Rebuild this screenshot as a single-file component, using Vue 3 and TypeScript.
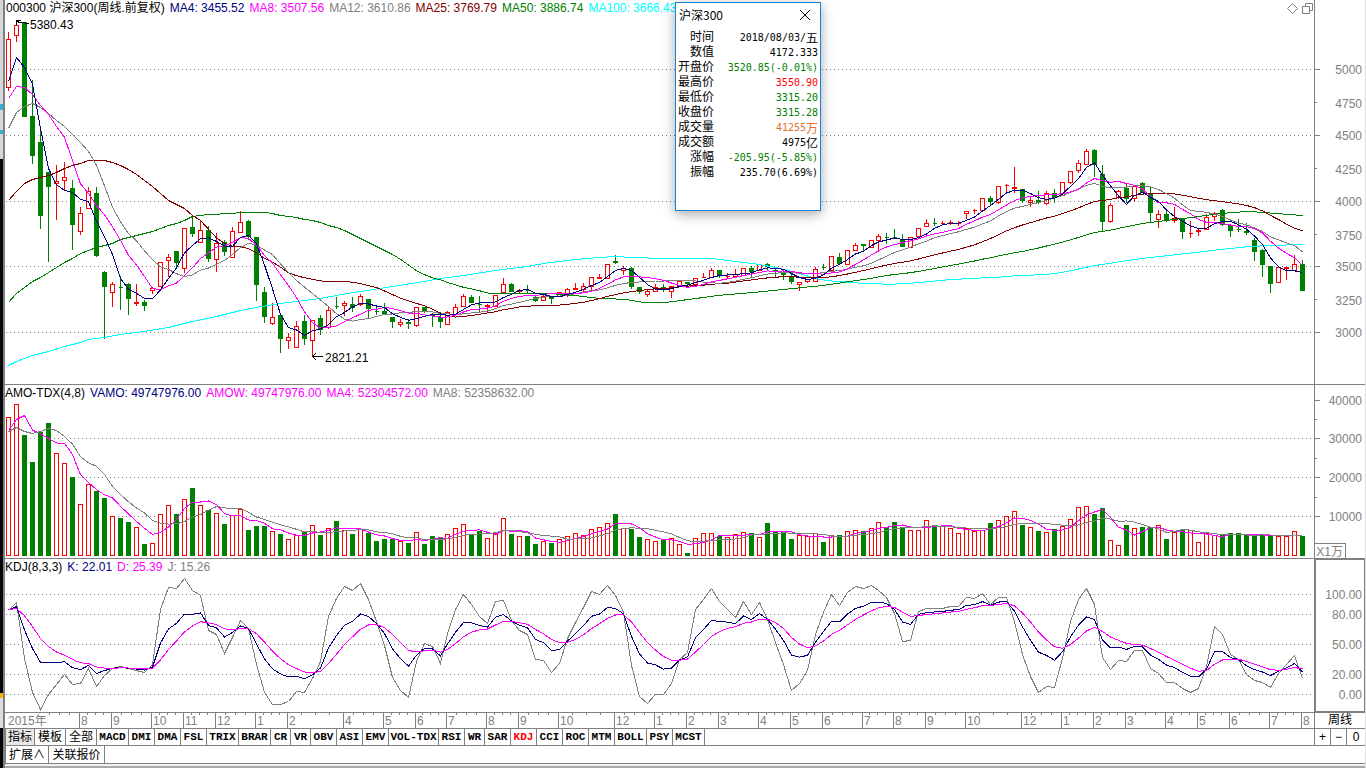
<script setup lang="ts">
import { ref } from 'vue'

type Point = [number, number]
interface Candle { up: boolean; high: number; top: number; bottom: number; low: number }

const candleSource = `
u32,39,87,90 u22,25,35,41 d22,22,116,116 d80,116,155,163 d131,142,215,228 d172,172,186,261 u165,181,183,219 u162,177,180,190
d180,188,224,249 u207,213,231,234 u187,191,208,208 d187,193,255,256 d271,272,286,338 u282,284,292,306 d276,287,287,309 d283,284,298,314
u284,302,303,305 d300,302,305,310 u287,288,290,293 u262,262,286,286 u254,257,260,276 d251,251,262,266 u228,228,268,272 d215,227,233,236
u220,230,242,242 d226,230,258,261 u233,243,259,271 d240,242,251,255 u227,231,257,257 u211,222,232,232 d220,221,236,239 d237,237,284,300
d287,292,316,322 u303,317,323,324 d313,315,338,352 u333,337,340,348 u321,326,347,347 d315,321,338,344 u320,320,340,356 d315,318,329,334
u306,310,327,328 d297,306,306,308 u301,303,305,315 d297,304,307,311 u294,296,304,305 d299,299,308,317 d307,311,311,314 d303,311,313,313
d317,317,321,327 u319,322,324,326 d319,322,323,328 u307,307,325,326 d307,307,311,312 d313,315,315,326 d312,317,321,327 u311,312,324,324
u304,307,314,314 u294,296,306,306 d295,297,302,302 d296,304,304,311 u304,305,306,311 u295,295,306,306 u278,284,292,292 d283,284,291,291
u289,290,291,292 d285,290,290,293 d296,297,300,301 u294,296,300,300 d296,296,298,303 u292,292,296,296 u288,289,293,296 u283,288,289,289
u283,286,289,291 u277,277,286,290 u274,277,278,278 u264,264,278,278 d255,261,262,263 u266,268,270,274 d267,268,286,288 d287,287,291,293
u289,291,294,296 u284,287,291,291 d284,287,289,291 u286,286,291,297 u281,281,286,286 d282,282,283,284 u278,278,284,286 u273,277,277,277
u268,270,277,277 d270,270,275,277 u273,276,276,277 u269,274,276,276 u268,268,275,275 d266,268,271,276 u264,264,270,270 d263,264,266,269
d269,270,271,277 d269,273,274,279 d274,276,281,283 u282,282,284,290 u279,279,281,282 u267,269,281,281 d264,267,267,269 u256,256,270,270
d253,257,263,264 u250,250,264,264 u243,245,250,250 d244,244,245,250 u240,240,247,247 u234,236,240,251 d233,237,237,243 d229,237,237,238
d234,239,246,246 u237,237,247,247 u228,228,236,236 u219,223,226,226 d218,223,223,225 u221,223,223,224 u220,222,222,224 u221,223,223,225
u211,211,213,218 u209,210,210,213 u198,198,210,210 d196,198,201,205 u186,186,202,203 u184,185,185,193 u167,187,188,192 d189,189,200,202
u196,200,202,206 d191,200,202,203 u191,193,203,204 d189,193,197,202 u182,182,195,195 u171,171,182,183 u160,163,170,172 u149,151,164,164
d149,150,164,176 d165,174,221,231 u203,205,221,222 u190,191,197,198 d183,188,198,202 u185,186,198,201 d182,183,192,192 d187,193,212,222
u210,214,219,227 d210,214,220,221 u207,218,220,222 d218,218,231,238 u221,233,233,237 u228,230,231,235 u214,217,229,229 u212,213,216,220
d209,210,224,225 d225,225,230,236 d219,229,229,231 d223,231,232,234 d238,240,251,260 d249,250,264,276 d266,266,283,292 u267,267,282,282
u267,267,268,279 u255,264,270,270 d260,264,290,290`

const amountTops = `
417 404 435 462 432 423 453 463 477 504 484 491 498 516 518 522 527 544 543 514 505 514 499 488 505 510 513 524 515 509 530 526
526 531 534 539 535 531 525 535 528 521 530 534 529 533 541 539 539 541 543 532 544 536 537 534 528 524 534 531 538 533 518 534
536 536 544 541 543 539 536 533 535 529 527 523 514 528 529 537 539 541 540 538 544 553 538 533 533 536 537 534 532 533 537 523
531 532 539 535 536 533 542 535 535 531 530 531 528 522 527 522 527 530 530 520 525 526 528 533 528 531 530 523 520 516 511 525
527 531 532 529 526 519 507 506 514 508 540 545 525 528 527 527 525 539 532 529 530 542 533 535 535 533 533 535 535 535 535 536
536 531 536`

const jSource = `
84 92 36 2 -15 0 10 20 10 11 26 8 19 26 28 26 24 22 30 85 107 106 116 104 99 64 60 41 57 74 66 30 2 -10 -10 -7 3 2 16 33
78 96 108 104 111 95 73 49 17 4 -3 33 51 48 31 61 85 100 90 78 71 93 94 74 64 60 35 34 22 31 56 72 87 103 100 109 99 82 29 -2
-9 0 0 11 35 42 85 95 106 93 85 77 93 80 92 75 52 30 4 11 24 60 82 100 89 102 108 106 109 104 97 81 53 54 83 86 86 86 88 88
97 96 101 90 97 97 73 40 18 2 8 7 36 73 95 106 90 37 25 34 33 44 44 26 21 12 12 6 2 6 28 68 60 40 35 20 14 12 7 21 30 39 16`

const words = (s: string): string[] => s.trim().split(/\s+/)

const candles: Candle[] = words(candleSource).map((w) => {
  const [high, top, bottom, low] = w.slice(1).split(',').map(Number)
  return { up: w[0] === 'u', high, top, bottom, low }
})
const amounts = words(amountTops).map(Number)
const jValues = words(jSource).map(Number)

const xAt = (i: number): number => 8.5 + 8 * i - (i >= 55 ? 1 : 0) - (i >= 109 ? 1 : 0)
const toPoints = (pts: Point[]): string => pts.map(([i, y]) => `${xAt(i)},${(y + 0.5).toFixed(1)}`).join(' ')

const candlePath = (up: boolean): string =>
  candles
    .map((c, i) => {
      if (c.up !== up) return ''
      const x = xAt(i)
      const t = c.top + 0.5
      const b = c.bottom + 0.5
      const upper = c.high < c.top ? `M${x},${c.high + 0.5}V${t}` : ''
      const lower = c.low > c.bottom ? `M${x},${b}V${c.low + 0.5}` : ''
      return `M${x - 2},${t}H${x + 2}V${b}H${x - 2}Z${upper}${lower}`
    })
    .join('')

const amountPath = (up: boolean): string =>
  amounts
    .map((top, i) => (candles[i].up === up ? `M${xAt(i) - 2},${top + 0.5}h4V555.5h-4Z` : ''))
    .join('')

function average(values: number[], n: number, seed: Point[]): string {
  const pts: Point[] = [...seed]
  for (let i = n - 1; i < values.length; i++) {
    let sum = 0
    for (let k = 0; k < n; k++) sum += values[i - k]
    pts.push([i, sum / n])
  }
  return toPoints(pts)
}
const fromStart = (ys: number[]): Point[] => ys.map((y, i) => [i, y])

const closes = candles.map((c) => (c.up ? c.top : c.bottom))
const priceLines = [
  { color: '#00ffff', points: average(closes, 100, [
    [0, 365], [1, 361], [2, 358], [3, 355], [5, 351], [7, 346], [9, 342], [10, 339], [12, 337], [14, 334], [17, 331], [20, 327],
    [23, 321], [26, 316], [29, 310], [31, 307], [34, 303], [37, 300], [39, 298], [41, 295], [44, 291], [48, 286], [52, 281],
    [54, 278], [57, 275], [61, 270], [65, 266], [67, 263], [71, 259], [74, 257], [76, 256], [78, 257], [82, 258], [88, 258],
    [90, 260], [92, 262], [94, 264], [96, 267], [98, 271]]) },
  { color: '#008000', points: average(closes, 50, fromStart([
    302, 293, 287, 281, 277, 272, 267, 262, 258, 253, 250, 247, 245, 243, 239, 237, 235, 233, 231, 228, 225, 223, 220, 216, 215,
    214, 214, 213, 213, 212, 212, 212, 212, 213, 215, 216, 217, 219, 220, 222, 225, 227, 230, 234, 238, 242, 246, 250, 254])) },
  { color: '#800000', points: average(closes, 25, fromStart([
    200, 191, 183, 179, 177, 175, 172, 168, 165, 163, 160, 160, 160, 162, 165, 169, 174, 180, 186, 193, 200, 204, 208, 215])) },
  { color: '#808080', points: average(closes, 12, fromStart([128, 112, 106, 103, 107, 113, 120, 126, 134, 142, 151])) },
  { color: '#ff00ff', points: average(closes, 8, fromStart([98, 86, 87, 94, 105, 114, 126])) },
  { color: '#000080', points: average(closes, 4, fromStart([81, 57, 67])) },
]
const amountLines = [
  { color: '#ff00ff', points: average(amounts, 4, fromStart([430, 419, 415])) },
  { color: '#808080', points: average(amounts, 8, fromStart([431, 427, 431, 433, 431, 428, 430])) },
]

const kPoints: Point[] = []
const dPoints: Point[] = []
let previousD = 85
jValues.forEach((j, i) => {
  const d = (6 * previousD + j) / 7
  previousD = d
  kPoints.push([i, 694 - (j + 2 * d) / 3])
  dPoints.push([i, 694 - d])
})
const kdjLines = [
  { color: '#808080', points: toPoints(jValues.map((j, i): Point => [i, 694 - j])) },
  { color: '#000080', points: toPoints(kPoints) },
  { color: '#ff00ff', points: toPoints(dPoints) },
]

const priceAxis = [
  { y: 69, label: '5000' }, { y: 102, label: '4750', minor: true }, { y: 135, label: '4500' },
  { y: 168, label: '4250', minor: true }, { y: 201, label: '4000' }, { y: 234, label: '3750', minor: true },
  { y: 266, label: '3500' }, { y: 299, label: '3250', minor: true }, { y: 332, label: '3000' },
]
const amountAxis = [
  { y: 400, label: '40000' }, { y: 419, label: '', minor: true }, { y: 438, label: '30000' },
  { y: 458, label: '', minor: true }, { y: 477, label: '20000' }, { y: 497, label: '', minor: true },
  { y: 516, label: '10000' },
]
const kdjAxis = [
  { y: 594, label: '100.00' }, { y: 614, label: '80.00' }, { y: 644, label: '50.00' },
  { y: 674, label: '20.00' }, { y: 694, label: '0.00' },
]

const months: [number, string][] = [
  [79, '8'], [111, '9'], [151, '10'], [183, '11'], [215, '12'], [255, '1'], [287, '2'], [343, '4'], [383, '5'], [415, '6'],
  [446, '7'], [486, '8'], [518, '9'], [558, '10'], [614, '12'], [654, '1'], [686, '2'], [718, '3'], [758, '4'], [790, '5'],
  [822, '6'], [862, '7'], [893, '8'], [925, '9'], [965, '10'], [1021, '12'], [1061, '1'], [1093, '2'], [1125, '3'],
  [1165, '4'], [1197, '5'], [1229, '6'], [1269, '7'], [1301, '8'],
]
const monthStarts = [39, ...months.map((m) => m[0])]
const weekTicks = monthStarts.slice(1).flatMap((end, i) => {
  const start = monthStarts[i]
  return [1, 2, 3].map((q) => Math.floor(start + ((end - start) * q) / 4))
})
const tickPath =
  weekTicks.map((x) => `M${x + 0.5},713v2`).join('') + months.map(([x]) => `M${x + 0.5},713v15`).join('')

const priceLegend = [
  ['#000080', 'MA4: 3455.52'], ['#ff00ff', 'MA8: 3507.56'], ['#808080', 'MA12: 3610.86'],
  ['#800000', 'MA25: 3769.79'], ['#008000', 'MA50: 3886.74'], ['#00ffff', 'MA100: 3666.43'],
]
const amountLegend = [
  ['#000080', 'VAMO: 49747976.00'], ['#ff00ff', 'AMOW: 49747976.00'],
  ['#ff00ff', 'MA4: 52304572.00'], ['#808080', 'MA8: 52358632.00'],
]
const kdjLegend = [['#000080', 'K: 22.01'], ['#ff00ff', 'D: 25.39'], ['#808080', 'J: 15.26']]

const indicators = words(
  'MACD DMI DMA FSL TRIX BRAR CR VR OBV ASI EMV VOL-TDX RSI WR SAR KDJ CCI ROC MTM BOLL PSY MCST',
)
const active = ref('KDJ')
const quoteOpen = ref(true)

const quote = [
  { name: '时间', num: '2018/08/03/', unit: '五', tone: 'black' },
  { name: '数值', num: '4172.333', unit: '', tone: 'black' },
  { name: '开盘价', num: '3520.85(-0.01%)', unit: '', tone: 'green' },
  { name: '最高价', num: '3550.90', unit: '', tone: 'red' },
  { name: '最低价', num: '3315.20', unit: '', tone: 'green' },
  { name: '收盘价', num: '3315.28', unit: '', tone: 'green' },
  { name: '成交量', num: '41255', unit: '万', tone: 'orange' },
  { name: '成交额', num: '4975', unit: '亿', tone: 'black' },
  { name: '涨幅', num: '-205.95(-5.85%)', unit: '', tone: 'green' },
  { name: '振幅', num: '235.70(6.69%)', unit: '', tone: 'black' },
]
</script>

<template>
  <div class="screen">
    <div class="desk-edge"></div>
    <main class="terminal">
      <section class="pane">
        <header class="legend price-legend">
          <span>000300 沪深300(周线.前复权)</span>
          <span v-for="[color, text] in priceLegend" :key="text" :style="{ color }">{{ text }}</span>
        </header>
        <div class="pane-tools">
          <button type="button" aria-label="标记">
            <svg width="11" height="11" viewBox="0 0 11 11"><path d="M5.5,0.5L10.5,5.5L5.5,10.5L0.5,5.5Z" /></svg>
          </button>
          <button type="button" aria-label="还原">
            <svg width="11" height="11" viewBox="0 0 11 11"><path d="M0.5,3.5h7v7h-7ZM3.5,3.5v-3h7v7h-3" /></svg>
          </button>
        </div>
        <svg class="plot price" viewBox="5 0 1309 384" preserveAspectRatio="none">
          <g class="grid">
            <path v-for="y in [69, 135, 201, 266, 332]" :key="y" :d="`M6,${y + 0.5}H1313`" />
          </g>
          <path class="up" :d="candlePath(true)" />
          <path class="down" :d="candlePath(false)" />
          <polyline v-for="l in priceLines" :key="l.color" :points="l.points" :stroke="l.color" />
          <path class="mark" d="M16.5,24.5V20.5H21M16.5,20.5L19,22.5H24L26,23.5H29" />
          <path class="mark" d="M312.5,356.5H323M312.5,356.5L316,353M312.5,356.5L316,360" />
          <text class="note" x="30" y="29">5380.43</text>
          <text class="note" x="325" y="362">2821.21</text>
        </svg>
        <svg class="axis price" viewBox="1314 0 51 384">
          <path d="M1314.5,0V384" />
          <g v-for="a in priceAxis" :key="a.y">
            <path :d="`M1315,${a.y + 0.5}h${a.minor ? 2 : 5}`" />
            <text x="1362" :y="a.y + (a.minor ? 6 : 5)">{{ a.label }}</text>
          </g>
        </svg>
      </section>

      <section class="pane">
        <header class="legend">
          <span>AMO-TDX(4,8)</span>
          <span v-for="[color, text] in amountLegend" :key="text" :style="{ color }">{{ text }}</span>
        </header>
        <svg class="plot amount" viewBox="5 385 1309 173" preserveAspectRatio="none">
          <g class="grid">
            <path v-for="y in [438, 477, 516]" :key="y" :d="`M6,${y + 0.5}H1313`" />
          </g>
          <path class="up" :d="amountPath(true)" />
          <path class="down" :d="amountPath(false)" />
          <polyline v-for="l in amountLines" :key="l.color" :points="l.points" :stroke="l.color" />
        </svg>
        <svg class="axis amount" viewBox="1314 385 51 173">
          <path d="M1314.5,385V558" />
          <g v-for="a in amountAxis" :key="a.y">
            <path :d="`M1315,${a.y + 0.5}h${a.minor ? 2 : 5}`" />
            <text x="1362" :y="a.y + 5">{{ a.label }}</text>
          </g>
          <path d="M1315,543.5H1345.5V558" />
          <text x="1343" y="556">X1万</text>
        </svg>
      </section>

      <section class="pane kdj-pane">
        <header class="legend">
          <span>KDJ(8,3,3)</span>
          <span v-for="[color, text] in kdjLegend" :key="text" :style="{ color }">{{ text }}</span>
        </header>
        <svg class="plot kdj" viewBox="5 559 1309 153" preserveAspectRatio="none">
          <g class="grid">
            <path v-for="a in kdjAxis" :key="a.y" :d="`M6,${a.y + 0.5}H1313`" />
          </g>
          <polyline v-for="l in kdjLines" :key="l.color" :points="l.points" :stroke="l.color" />
        </svg>
        <svg class="axis kdj" viewBox="1314 559 51 153">
          <path d="M1314,559.5H1365M1364.5,559V712M1314,711.5H1365" />
          <path d="M1314.5,559V712M1315.5,559V712" />
          <text v-for="a in kdjAxis" :key="a.y" x="1362" :y="a.y + 5">{{ a.label }}</text>
        </svg>
      </section>

      <div class="date-row">
        <svg class="dates" viewBox="5 713 1309 15" preserveAspectRatio="none">
          <path :d="tickPath" />
          <text x="8" y="725">2015年</text>
          <text v-for="[x, label] in months" :key="x" :x="x + 2" y="725">{{ label }}</text>
        </svg>
        <span class="period">周线</span>
      </div>

      <nav class="tab-row">
        <button type="button" class="word picked">指标</button>
        <button type="button" class="word">模板</button>
        <button type="button" class="word">全部</button>
        <button
          v-for="name in indicators"
          :key="name"
          type="button"
          class="code"
          :class="{ active: name === active }"
          :style="{ width: name.length * 6 + 8 + 'px' }"
          @click="active = name"
        >{{ name }}</button>
        <span class="zoom-keys">
          <button type="button">+</button>
          <button type="button">−</button>
          <button type="button">0</button>
        </span>
      </nav>

      <nav class="tab-row extra">
        <button type="button" class="more">扩展∧</button>
        <button type="button" class="linked">关联报价</button>
      </nav>
      <div class="bottom-edge"></div>
    </main>

    <section v-if="quoteOpen" class="quote" role="dialog" aria-label="沪深300">
      <header>
        <h1>沪深300</h1>
        <button type="button" aria-label="关闭" @click="quoteOpen = false">
          <svg width="12" height="12" viewBox="0 0 12 12"><path d="M1,1L11,11M11,1L1,11" /></svg>
        </button>
      </header>
      <dl>
        <div v-for="q in quote" :key="q.name">
          <dt>{{ q.name }}</dt>
          <dd :class="q.tone">{{ q.num }}<span v-if="q.unit">{{ q.unit }}</span></dd>
        </div>
      </dl>
    </section>
  </div>
</template>

<style>
body {
  margin: 0;
  background: #fff;
}
</style>

<style scoped>
* {
  box-sizing: border-box;
}
.screen {
  position: relative;
  display: flex;
  min-height: 100vh;
  background: #fff;
  color: #000;
  font: 12px/16px "Liberation Sans", "Noto Sans CJK SC", sans-serif;
  overflow: hidden;
}
button {
  margin: 0;
  padding: 0;
  border: 0;
  background: none;
  color: inherit;
  font: inherit;
}
.desk-edge {
  flex: none;
  width: 5px;
  border-right: 2px solid #808080;
  background: linear-gradient(#d4d6d8 0 104px, #2bb3d0 104px 110px, #d4d6d8 110px 130px, #2bb3d0 130px 134px, #d4d6d8 134px 159px, #05050c 159px 693px, #f0b000 693px 698px, #dcdcdc 698px 728px, #05050c 728px);
}
.terminal {
  flex: 1;
  min-width: 0;
  display: flex;
  flex-direction: column;
  border-right: 1px solid #e0e0e0;
}
.pane {
  position: relative;
  display: flex;
  border-bottom: 1px solid #808080;
}
.legend {
  position: absolute;
  top: 0;
  left: 0;
  display: flex;
  gap: 5px;
  white-space: nowrap;
}
.price-legend {
  left: 1px;
}
.pane-tools {
  position: absolute;
  top: 3px;
  right: 52px;
  display: flex;
  gap: 4px;
}
.pane-tools button,
.pane-tools svg {
  display: block;
}
.pane-tools path {
  fill: none;
  stroke: #808080;
}
.plot {
  display: block;
  flex: 1;
  min-width: 0;
  shape-rendering: crispEdges;
}
.axis {
  display: block;
  flex: none;
  width: 51px;
  shape-rendering: crispEdges;
}
.price {
  height: 384px;
}
.amount {
  height: 173px;
}
.kdj {
  height: 153px;
}
.grid path {
  fill: none;
  stroke: #808080;
  stroke-dasharray: 1 3;
}
.up {
  fill: none;
  stroke: #f00;
  stroke-linecap: square;
}
.down {
  fill: #008000;
  stroke: #008000;
  stroke-linecap: square;
}
polyline {
  fill: none;
  stroke-width: 1;
}
.mark {
  fill: none;
  stroke: #000;
}
.note {
  fill: #000;
}
.axis path,
.dates path {
  fill: none;
  stroke: #808080;
}
.axis text {
  fill: #808080;
  text-anchor: end;
}
.dates text {
  fill: #808080;
}
.date-row {
  display: flex;
  border-bottom: 1px solid #808080;
}
.dates {
  flex: 1;
  min-width: 0;
  height: 15px;
  display: block;
  shape-rendering: crispEdges;
}
.period {
  width: 51px;
  border-left: 1px solid #808080;
  line-height: 15px;
  text-align: center;
}
.tab-row {
  display: flex;
  height: 17px;
  border-bottom: 1px solid #808080;
  border-left: 1px solid #808080;
  line-height: 16px;
}
.tab-row button {
  flex: none;
  border-right: 1px solid #808080;
  line-height: 16px;
  text-align: center;
  white-space: nowrap;
}
.word {
  width: 31px;
}
.word.picked {
  width: 29px;
  background: #e8e8e8;
}
.tab-row .code {
  font: bold 11px/16px "Liberation Mono", monospace;
}
.tab-row .code.active {
  color: #f00;
}
.zoom-keys {
  display: flex;
  margin-left: auto;
  width: 51px;
  border-left: 1px solid #808080;
}
.zoom-keys button {
  width: 16px;
}
.zoom-keys button:last-child {
  width: 18px;
  border-right: 0;
}
.tab-row.extra {
  height: 18px;
}
.tab-row .more {
  width: 43px;
}
.tab-row .linked {
  width: 56px;
}
.bottom-edge {
  height: 4px;
  border-bottom: 2px solid #a9a9a9;
  background: #f0f0f0;
}
.quote {
  position: absolute;
  top: 2px;
  left: 675px;
  width: 146px;
  height: 209px;
  border: 1px solid #1883d7;
  background: #fff;
  box-shadow: 0 3px 12px rgba(0, 0, 0, 0.35);
}
.quote header {
  display: flex;
  justify-content: space-between;
  align-items: center;
  height: 24px;
  padding: 0 9px 0 3px;
}
.quote h1 {
  margin: 0;
  font: 12px/16px "Noto Sans CJK SC", sans-serif;
}
.quote header button,
.quote header svg {
  display: block;
}
.quote header path {
  fill: none;
  stroke: #000;
}
dl {
  margin: 0;
  padding: 3px 2px 0;
}
dl div {
  display: flex;
  justify-content: space-between;
  height: 15px;
  line-height: 15px;
}
dt {
  width: 36px;
  text-align: right;
}
dd {
  display: flex;
  align-items: center;
  margin: 0;
  font: 10px/15px "DejaVu Sans Mono", monospace;
}
dd span {
  font: 12px/15px "Noto Sans CJK SC", sans-serif;
}
.black {
  color: #000;
}
.green {
  color: #008000;
}
.red {
  color: #f00;
}
.orange {
  color: #e07030;
}
</style>
